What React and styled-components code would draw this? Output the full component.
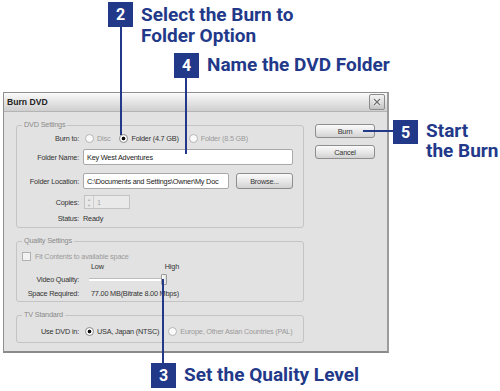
import React from 'react';
import styled, { createGlobalStyle } from 'styled-components';

const NAVY = '#22398a';

const Global = createGlobalStyle`
  html, body { margin: 0; padding: 0; background: #fff; }
  body { width: 500px; height: 391px; overflow: hidden; }
`;

const Page = styled.div`
  position: relative;
  width: 500px;
  height: 391px;
  background: #fff;
  overflow: hidden;
  font-family: "Liberation Sans", Arial, sans-serif;
`;

const TopArea = styled.div`
  height: 92px;
  display: flex;
  flex-direction: column;
`;

const Callout = styled.div`
  display: flex;
  align-items: flex-start;
  margin-left: ${(p) => p.$ml}px;
  margin-top: ${(p) => p.$mt || 0}px;
  height: ${(p) => (p.$h ? `${p.$h}px` : 'auto')};
  flex: none;
`;

const Badge = styled.div`
  width: 25px;
  height: ${(p) => p.$h || 25}px;
  flex: none;
  background: ${NAVY};
  color: #fff;
  font: 700 16px Roboto, "Liberation Sans", sans-serif;
  display: flex;
  align-items: center;
  justify-content: center;
`;

const CalloutText = styled.div`
  margin-left: 8px;
  padding-top: ${(p) => p.$pt ?? 3}px;
  color: ${NAVY};
  font: 700 19px/${(p) => p.$lh || 20}px Roboto, "Liberation Sans", sans-serif;
  white-space: nowrap;
`;

const MainRow = styled.div`
  display: flex;
  align-items: flex-start;
`;

const Dialog = styled.div`
  margin-left: 3px;
  width: 386px;
  height: 261px;
  box-sizing: border-box;
  flex: none;
  border: 1px solid #8f8f8f;
  border-right: 2px solid #9c9c9c;
  border-bottom: 2px solid #8a8a8a;
  background: #e2e2e2;
  display: flex;
  flex-direction: column;
  font-size: 7.3px;
  letter-spacing: -0.2px;
  color: #333;
`;

const TitleBar = styled.div`
  height: 18px;
  flex: none;
  display: flex;
  align-items: center;
  justify-content: space-between;
  padding: 0 2px 0 3px;
  background: linear-gradient(#fafafa, #e6e6e6 45%, #cfcfcf);
  border-bottom: 1px solid #b4b4b4;
`;

const Title = styled.span`
  font-weight: 700;
  font-size: 8.6px;
  letter-spacing: 0;
  color: #222;
`;

const CloseBtn = styled.div`
  width: 14px;
  height: 14px;
  border: 1px solid #8c8c8c;
  border-radius: 2px;
  background: linear-gradient(#f4f4f4, #c4c4c4);
  display: flex;
  align-items: center;
  justify-content: center;
`;

const Body = styled.div`
  flex: 1;
  display: flex;
  align-items: flex-start;
  padding: 12px 0 0 12px;
`;

const LeftCol = styled.div`
  margin-top: 1px;
  width: 288px;
  display: flex;
  flex-direction: column;
`;

const Group = styled.div`
  box-sizing: border-box;
  height: ${(p) => p.$h}px;
  margin-top: ${(p) => p.$mt || 0}px;
  border: 1px solid #c4c4c4;
  border-radius: 3px;
  display: flex;
  flex-direction: column;
`;

const Legend = styled.div`
  align-self: flex-start;
  height: 10px;
  line-height: 10px;
  margin: -6px 0 0 5px;
  padding: 0 2px;
  background: #e2e2e2;
  color: #8a8a8a;
`;

const Row = styled.div`
  display: flex;
  align-items: center;
  white-space: nowrap;
  height: ${(p) => p.$h}px;
  margin-top: ${(p) => p.$mt || 0}px;
  padding-left: ${(p) => p.$pl || 0}px;
`;

const Label = styled.span`
  width: ${(p) => p.$w || 62}px;
  flex: none;
  text-align: right;
  margin-right: ${(p) => p.$gap ?? 4}px;
  color: #333;
`;

const Radio = styled.span`
  width: 7px;
  height: 7px;
  flex: none;
  border-radius: 50%;
  border: 1px solid ${(p) => (p.$off ? '#b5b5b5' : '#8a8a8a')};
  background: ${(p) => (p.$on ? 'radial-gradient(circle, #111 0 1.6px, #fff 2.2px)' : '#fafafa')};
  margin-left: ${(p) => p.$ml || 0}px;
  margin-right: 3px;
`;

const OptText = styled.span`
  color: ${(p) => (p.$off ? '#9a9a9a' : '#333')};
`;

const TextField = styled.div`
  box-sizing: border-box;
  width: ${(p) => p.$w}px;
  height: 16px;
  border: 1px solid #a9a9a9;
  border-radius: 2px;
  background: #fff;
  padding-left: 3px;
  display: flex;
  align-items: center;
  white-space: nowrap;
  overflow: hidden;
  color: #222;
`;

const Button = styled.div`
  box-sizing: border-box;
  width: ${(p) => p.$w}px;
  height: ${(p) => p.$h || 14}px;
  margin-left: ${(p) => p.$ml || 0}px;
  border: 1px solid #8e8e8e;
  border-radius: 3px;
  background: linear-gradient(#fbfbfb, #e4e4e4 60%, #d2d2d2);
  display: flex;
  align-items: center;
  justify-content: center;
  color: #333;
`;

const Spinner = styled.div`
  box-sizing: border-box;
  width: 46px;
  height: 14px;
  margin-left: 1px;
  border: 1px solid #c2c2c2;
  background: #e9e9e9;
  display: flex;
  align-items: center;
  color: #aaa;
`;

const SpinArrows = styled.div`
  width: 8px;
  height: 12px;
  border-right: 1px solid #cfcfcf;
  display: flex;
  flex-direction: column;
  align-items: center;
  justify-content: space-around;
  margin-right: 3px;
  font-size: 4px;
  line-height: 5px;
  color: #b0b0b0;
`;

const Checkbox = styled.span`
  width: 7px;
  height: 7px;
  flex: none;
  border: 1px solid #b2b2b2;
  background: #f2f2f2;
  margin-right: 4px;
`;

const ScaleLabels = styled.div`
  display: flex;
  margin-left: 74px;
  width: 88px;
  justify-content: space-between;
`;

const Slider = styled.div`
  display: flex;
  align-items: center;
  margin-left: 6px;
  height: 12px;
`;

const Track = styled.div`
  width: 72px;
  height: 2px;
  border-top: 1px solid #bdbdbd;
  background: #fff;
`;

const Thumb = styled.div`
  box-sizing: border-box;
  width: 6px;
  height: 11px;
  border: 1px solid #9a9a9a;
  border-radius: 1px;
  background: linear-gradient(90deg, #fff, #e0e0e0);
`;

const Value = styled.span`
  margin-left: ${(p) => p.$ml || 0}px;
`;

const RightCol = styled.div`
  margin-left: 11px;
  display: flex;
  flex-direction: column;
  gap: 7px;
`;

const SideCallout = styled.div`
  margin-left: 4px;
  margin-top: 28px;
  display: flex;
  align-items: flex-start;
`;

const Line = styled.div`
  position: absolute;
  left: ${(p) => p.$x}px;
  top: ${(p) => p.$y}px;
  width: ${(p) => p.$w || 2}px;
  height: ${(p) => p.$h || 2}px;
  background: ${NAVY};
`;

export default function App() {
  return (
    <Page>
      <Global />
      <TopArea>
        <Callout $ml={108} $mt={2} $h={51}>
          <Badge>2</Badge>
          <CalloutText $pt={2} $lh={21}>
            Select the Burn to
            <br />
            Folder Option
          </CalloutText>
        </Callout>
        <Callout $ml={174}>
          <Badge>4</Badge>
          <CalloutText $pt={2}>Name the DVD Folder</CalloutText>
        </Callout>
      </TopArea>

      <MainRow>
        <Dialog>
          <TitleBar>
            <Title>Burn DVD</Title>
            <CloseBtn>
              <svg width="10" height="10" viewBox="0 0 10 10">
                <path d="M2 2 L8 8 M8 2 L2 8" stroke="#fff" strokeWidth="2.8" />
                <path d="M2 2 L8 8 M8 2 L2 8" stroke="#6a6a6a" strokeWidth="1.3" />
              </svg>
            </CloseBtn>
          </TitleBar>
          <Body>
            <LeftCol>
              <Group $h={103}>
                <Legend>DVD Settings</Legend>
                <Row $h={14} $mt={1}>
                  <Label>Burn to:</Label>
                  <Radio $off $ml={2} />
                  <OptText $off>Disc</OptText>
                  <Radio $on $ml={9} />
                  <OptText>Folder (4.7 GB)</OptText>
                  <Radio $off $ml={10} />
                  <OptText $off>Folder (8.5 GB)</OptText>
                </Row>
                <Row $h={16} $mt={4}>
                  <Label>Folder Name:</Label>
                  <TextField $w={210}>Key West Adventures</TextField>
                </Row>
                <Row $h={16} $mt={8}>
                  <Label>Folder Location:</Label>
                  <TextField $w={146}>C:\Documents and Settings\Owner\My Doc</TextField>
                  <Button $w={57} $h={16} $ml={7}>
                    Browse...
                  </Button>
                </Row>
                <Row $h={14} $mt={6}>
                  <Label>Copies:</Label>
                  <Spinner>
                    <SpinArrows>
                      <span>▲</span>
                      <span>▼</span>
                    </SpinArrows>
                    1
                  </Spinner>
                </Row>
                <Row $h={14} $mt={2}>
                  <Label>Status:</Label>
                  <span>Ready</span>
                </Row>
              </Group>

              <Group $h={61} $mt={13}>
                <Legend>Quality Settings</Legend>
                <Row $h={10} $mt={5} $pl={5}>
                  <Checkbox />
                  <OptText $off>Fit Contents to available space</OptText>
                </Row>
                <Row $h={10}>
                  <ScaleLabels>
                    <span>Low</span>
                    <span>High</span>
                  </ScaleLabels>
                </Row>
                <Row $h={12} $mt={2}>
                  <Label>Video Quality:</Label>
                  <Slider>
                    <Track />
                    <Thumb />
                  </Slider>
                </Row>
                <Row $h={12} $mt={2}>
                  <Label>Space Required:</Label>
                  <Value $ml={8}>77.00 MB(Bitrate 8.00 Mbps)</Value>
                </Row>
              </Group>

              <Group $h={28} $mt={13}>
                <Legend>TV Standard</Legend>
                <Row $h={12} $mt={5}>
                  <Label>Use DVD in:</Label>
                  <Radio $on $ml={2} />
                  <OptText>USA, Japan (NTSC)</OptText>
                  <Radio $off $ml={9} />
                  <OptText $off>Europe, Other Asian Countries (PAL)</OptText>
                </Row>
              </Group>
            </LeftCol>
            <RightCol>
              <Button $w={60}>Burn</Button>
              <Button $w={60}>Cancel</Button>
            </RightCol>
          </Body>
        </Dialog>
        <SideCallout>
          <Badge $h={24}>5</Badge>
          <CalloutText $pt={1} $lh={20}>
            Start
            <br />
            the Burn
          </CalloutText>
        </SideCallout>
      </MainRow>

      <Callout $ml={151} $mt={10}>
        <Badge>3</Badge>
        <CalloutText $pt={2}>Set the Quality Level</CalloutText>
      </Callout>

      <Line $x={120} $y={27} $h={108} />
      <Line $x={185} $y={78} $h={76} />
      <Line $x={363} $y={130} $w={30} />
      <Line $x={162} $y={279} $h={84} />
    </Page>
  );
}
